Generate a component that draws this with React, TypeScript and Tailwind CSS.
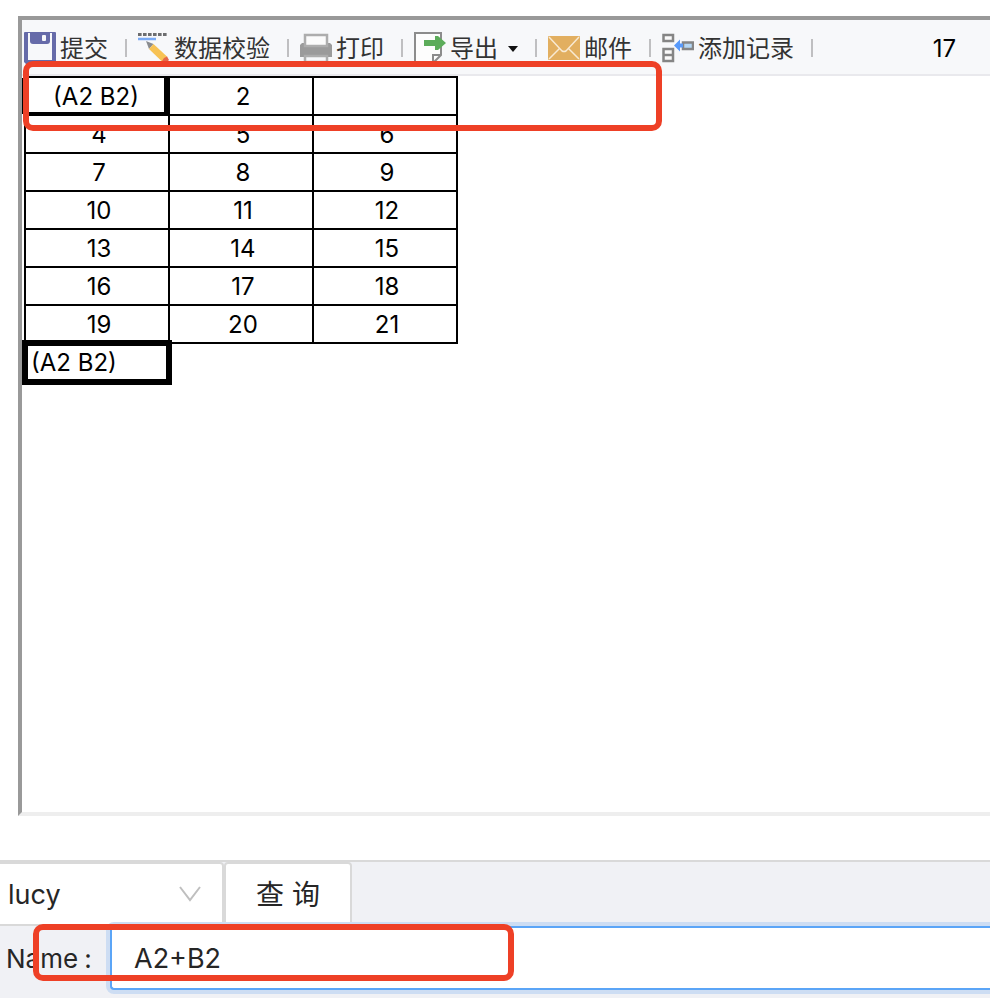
import { useState } from 'react'
import type { ReactNode } from 'react'

const ROWS = [
  ['(A2 B2)', '2', ''],
  ['4', '5', '6'],
  ['7', '8', '9'],
  ['10', '11', '12'],
  ['13', '14', '15'],
  ['16', '17', '18'],
  ['19', '20', '21'],
]

function SaveIcon() {
  return (
    <svg viewBox="0 0 32 32" className="w-8 h-8 shrink-0">
      <path d="M1 0H31Q32 0 32 1V32H2L0 30V1Q0 0 1 0Z" fill="#666ba9" />
      <path d="M4 1H28V28H4Z" fill="#f7f8fa" />
      <path d="M6 0H26V9Q26 12 23 12H9Q6 12 6 9Z" fill="#666ba9" />
      <rect x="18" y="3" width="4" height="6" rx="1" fill="#f7f8fa" />
    </svg>
  )
}

function CheckIcon() {
  return (
    <svg viewBox="0 0 32 32" className="w-8 h-8 shrink-0">
      <path d="M0 2.5H29" stroke="#6c6d6f" strokeWidth="3" strokeDasharray="3.6 1.4" />
      <path d="M0 7H18" stroke="#79aaf5" strokeWidth="2.5" />
      <path d="M8 9L15.5 12L11 17Z" fill="#8a8c8f" />
      <path d="M15.5 12L29.5 25L24.5 30L11 17Z" fill="#f7c254" />
      <path d="M26 26L29 24.5L31 28L28 31L24 29Z" fill="#e4674a" />
    </svg>
  )
}

function PrintIcon() {
  return (
    <svg viewBox="0 0 32 32" className="w-8 h-8 shrink-0">
      <path d="M2 11H30L32 13V25H0V13Z" fill="#9b9b9b" />
      <rect x="5" y="3" width="22" height="11" fill="#fbfbfb" stroke="#adadad" strokeWidth="2.5" />
      <rect x="5" y="24" width="22" height="6" fill="#f7f8fa" stroke="#adadad" strokeWidth="2.5" />
    </svg>
  )
}

function ExportIcon() {
  return (
    <svg viewBox="0 0 32 32" className="w-8 h-8 shrink-0">
      <path d="M1 1H27V23L19 31H1Z" fill="#fdfdfd" stroke="#8c8c8c" strokeWidth="2" />
      <path d="M19 30V23H27" fill="none" stroke="#8c8c8c" strokeWidth="2" />
      <path d="M10 8H21V4H24L32 11L24 18H21V14H10Z" fill="#5cac5a" />
    </svg>
  )
}

function MailIcon() {
  return (
    <svg viewBox="0 0 32 32" className="w-8 h-8 shrink-0">
      <rect y="4" width="32" height="24" rx="1" fill="#e2af60" />
      <path d="M1 5L14 19Q16 20 18 19L31 5M1 27L12 16M31 27L20 16" fill="none" stroke="#f8ead3" strokeWidth="1.5" />
    </svg>
  )
}

function AddRecordIcon() {
  return (
    <svg viewBox="0 0 32 32" className="w-8 h-8 shrink-0">
      <g fill="#fafafa" stroke="#858585" strokeWidth="2.5">
        <rect x="1.5" y="3" width="9.5" height="6" />
        <rect x="1.5" y="17" width="9.5" height="12" />
        <path d="M1 23H11" />
        <rect x="21" y="10.5" width="10" height="6.5" fill="#b4d7f5" />
      </g>
      <path d="M12 13.5L18 7.5V11.5H21V15.5H18V19.5Z" fill="#5799fa" />
    </svg>
  )
}

function ToolItem({ icon, label, menu = false }: { icon: ReactNode; label: string; menu?: boolean }) {
  return (
    <div className="flex items-center shrink-0">
      <button type="button" className="flex items-center gap-1 text-2xl text-[#333] whitespace-nowrap">
        {icon}
        <span className="pt-[2px]">{label}</span>
        {menu && (
          <svg viewBox="0 0 16 12" className="w-4 h-3">
            <path d="M6 4H16L11 10Z" fill="#111" />
          </svg>
        )}
      </button>
      <span className="w-[2px] h-[18px] ml-[17px] mr-[11px] bg-[#bfbfc1]" />
    </div>
  )
}

export default function App() {
  const [user, setUser] = useState('lucy')
  const [name, setName] = useState('A2+B2')
  const [editor, setEditor] = useState('(A2 B2)')

  return (
    <div className="relative overflow-hidden bg-white pt-4 font-['Inter','Noto_Sans_CJK_SC',sans-serif]">
      {/* Report viewer */}
      <section className="ml-[18px] min-h-[800px] border-4 border-r-0 border-t-[#999] border-l-[#999] border-b-[#eee]">
        <div className="flex items-center h-14 pt-[2px] pl-[2px] bg-[#f7f8fa] border-b-2 border-[#e9e9ed]">
          <ToolItem icon={<SaveIcon />} label="提交" />
          <ToolItem icon={<CheckIcon />} label="数据校验" />
          <ToolItem icon={<PrintIcon />} label="打印" />
          <ToolItem icon={<ExportIcon />} label="导出" menu />
          <ToolItem icon={<MailIcon />} label="邮件" />
          <ToolItem icon={<AddRecordIcon />} label="添加记录" />
          <span className="ml-auto pt-[2px] pr-[34px] text-2xl text-black">17</span>
        </div>

        <table className="ml-[2px] w-[434px] table-fixed border-collapse text-2xl text-black text-center">
          <tbody>
            {ROWS.map((row, r) => (
              <tr key={r}>
                {row.map((cell, c) =>
                  r === 0 && c === 0 ? (
                    <td key={c} className="h-[38px] p-0 border-2 border-black">
                      <div className="h-9 pl-[2px] border-r-4 border-b-2 border-black leading-[38px] shadow-[-4px_0_0_#000]">
                        {cell}
                      </div>
                    </td>
                  ) : (
                    <td key={c} className="h-[38px] p-0 pl-1 pt-[2px] border-2 border-black leading-[34px]">
                      {cell}
                    </td>
                  )
                )}
              </tr>
            ))}
          </tbody>
        </table>
        <input
          aria-label="Cell editor"
          value={editor}
          onChange={e => setEditor(e.target.value)}
          className="block relative -mt-1 w-[150px] h-[45px] pl-[3px] border-6 border-black bg-white text-2xl text-black outline-none"
        />
      </section>

      {/* Query form */}
      <form className="mt-11 h-[138px] border-t-2 border-[#d9d9d9] bg-[#f0f1f5] text-[#262626]" onSubmit={e => e.preventDefault()}>
        <div className="flex">
          <div className="relative">
            <select
              aria-label="User"
              value={user}
              onChange={e => setUser(e.target.value)}
              className="block appearance-none w-[224px] h-16 pt-[2px] pl-2 text-[27px] bg-white border-2 border-l-0 border-[#d9d9d9] rounded-r outline-none"
            >
              <option value="lucy">lucy</option>
            </select>
            <svg viewBox="0 0 22 16" className="absolute right-[23px] top-6 w-[22px] h-4 pointer-events-none">
              <path d="M1 1L11 14L21 1" fill="none" stroke="#bfbfbf" strokeWidth="2" />
            </svg>
          </div>
          <button type="submit" className="w-32 h-16 pt-[2px] bg-white border-2 border-[#d9d9d9] rounded text-[28px]">
            查 询
          </button>
        </div>
        <div className="flex items-center">
          <label htmlFor="name" className="w-[110px] pl-[6px] text-[26px]">
            Name<span className="ml-[6px]">:</span>
          </label>
          <input
            id="name"
            value={name}
            onChange={e => setName(e.target.value)}
            className="relative flex-1 min-w-0 h-16 pl-[22px] border-2 border-r-0 border-[#5ba5f7] rounded-l bg-white text-[27px] outline-none shadow-[0_0_0_4px_#cdddf3]"
          />
        </div>
      </form>

      {/* Highlight marks */}
      <div className="absolute left-[23px] top-[61px] w-[639px] h-[70px] border-6 border-[#ee4026] rounded-[10px] pointer-events-none" />
      <div className="absolute left-[33px] top-[924px] w-[481px] h-[57px] border-6 border-[#ee4026] rounded-[10px] pointer-events-none" />
    </div>
  )
}
